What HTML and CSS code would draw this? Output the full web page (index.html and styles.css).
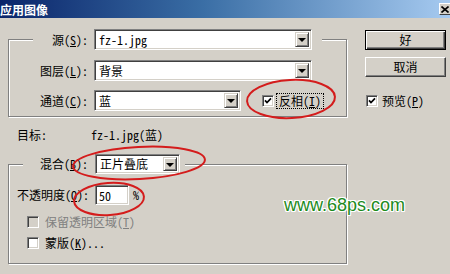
FILE: index.html
```html
<!DOCTYPE html>
<html lang="zh-CN">
<head>
  <meta charset="UTF-8">
  <title>应用图像</title>
  <link rel="stylesheet" href="styles.css">
</head>
<body>
  <div class="dialog">
    <div class="titlebar">
      <span class="title">应用图像</span>
      <span class="close">
        <svg width="8" height="7" viewBox="0 0 8 7"><path d="M0.5 0.5 L7.5 6.5 M7.5 0.5 L0.5 6.5" stroke="#000" stroke-width="1.6"/></svg>
      </span>
    </div>

    <div class="body">
      <div class="left">
        <fieldset class="group group-src">
          <legend class="row">
            <span class="lbl">源(<u>S</u>):</span>
            <div class="combo combo-wide"><span class="val">fz-1.jpg</span><i class="drop"></i></div>
          </legend>
          <div class="row row-layer">
            <span class="lbl">图层(<u>L</u>):</span>
            <div class="combo combo-wide"><span class="val">背景</span><i class="drop"></i></div>
          </div>
          <div class="row row-channel">
            <span class="lbl">通道(<u>C</u>):</span>
            <div class="combo combo-channel"><span class="val">蓝</span><i class="drop"></i></div>
            <span class="box checked invert-box"></span>
            <span class="focus">反相(<u>I</u>)</span>
          </div>
        </fieldset>

        <div class="target">
          <span class="target-key">目标:</span>
          <span>fz-1.jpg(蓝)</span>
        </div>

        <fieldset class="group group-blend">
          <legend class="row">
            <span class="lbl lbl-blend">混合(<u>B</u>):</span>
            <div class="combo combo-blend"><span class="val">正片叠底</span><i class="drop"></i></div>
          </legend>
          <div class="row row-opacity">
            <span class="lbl lbl-opacity">不透明度(<u>O</u>):</span>
            <div class="field">50</div>
            <span class="pct">%</span>
          </div>
          <div class="check check-keep disabled">
            <span class="box"></span>
            <span>保留透明区域(<u>T</u>)</span>
          </div>
          <div class="check check-mask">
            <span class="box"></span>
            <span>蒙版(<u>K</u>)...</span>
          </div>
        </fieldset>
      </div>

      <div class="right">
        <button class="btn btn-default">好</button>
        <button class="btn btn-cancel">取消</button>
        <div class="check check-preview">
          <span class="box checked"></span>
          <span>预览(<u>P</u>)</span>
        </div>
      </div>
    </div>

    <!-- red annotation rings drawn over the dialog -->
    <svg class="marks" width="450" height="274" viewBox="0 0 450 274">
      <ellipse cx="291" cy="99" rx="44" ry="19" transform="rotate(-3 291 99)"/>
      <ellipse cx="139" cy="163" rx="66" ry="16" transform="rotate(-3 139 163)"/>
      <ellipse cx="109" cy="199" rx="35" ry="16" transform="rotate(-4 109 199)"/>
    </svg>

    <div class="watermark">www.68ps.com</div>
  </div>
</body>
</html>
```

FILE: styles.css
```css
body {
  margin: 0;
  background: #d4d0c8;
  font: 12px/12px "Noto Sans Mono CJK SC", "Noto Sans CJK SC", sans-serif;
  color: #000;
}
u {
  text-decoration: underline;
  text-underline-offset: 1px;
}
.dialog {
  position: relative;
  width: 450px;
  height: 274px;
  overflow: hidden;
}

/* title bar */
.titlebar {
  height: 18px;
  display: flex;
  align-items: center;
  justify-content: space-between;
  background: linear-gradient(to right, #0a246a, #3a6ea5 45%, #a6caf0);
}
.title {
  color: #fff;
  font-weight: bold;
  font-family: "Noto Sans CJK SC", sans-serif;
  padding-left: 0;
  margin-top: 1px;
}
.close {
  width: 16px;
  height: 12px;
  margin-right: -5px;
  display: flex;
  align-items: center;
  justify-content: center;
  background: #d4d0c8;
  box-sizing: border-box;
  border: 1px solid;
  border-color: #fff #404040 #404040 #fff;
}
.close svg {
  margin-left: -4px;
}

/* layout */
.body {
  display: flex;
}
.left {
  padding-left: 8px;
  width: 340px;
}
.right {
  margin-left: 17px;
  width: 81px;
  display: flex;
  flex-direction: column;
}

/* etched group boxes */
.group {
  margin: 0;
  padding: 0;
  min-width: 0;
  box-sizing: border-box;
  width: 339px;
  border: 1px solid #808080;
  box-shadow: inset 1px 1px 0 #fff, 1px 1px 0 #fff;
}
.group legend {
  padding: 0;
  background: #d4d0c8;
}
.row {
  display: flex;
  align-items: center;
}
.lbl {
  width: 55px;
  text-align: right;
  margin-right: 6px;
  white-space: nowrap;
}

.group-src {
  margin-top: 11px;
  padding: 0 0 5px 24px;
}
.group-src legend {
  margin-left: 0;
  padding-right: 10px;
}
.row-layer {
  margin-top: 10px;
}
.row-channel {
  margin-top: 9px;
}

.group-blend {
  margin-top: 13px;
  padding: 0 0 14px 0;
}
.group-blend legend {
  margin-left: 14px;
  padding-right: 5px;
}
.lbl-blend {
  width: 65px;
  margin-right: 7px;
}
.row-opacity {
  margin-top: 11px;
  padding-left: 8px;
}
.lbl-opacity {
  width: 71px;
  margin-right: 7px;
}

/* sunken controls */
.combo, .field, .box {
  box-sizing: border-box;
  background: #fff;
  border: 1px solid;
  border-color: #808080 #fff #fff #808080;
  box-shadow: inset 1px 1px 0 #404040, inset -1px -1px 0 #d4d0c8;
}
.combo {
  height: 21px;
  display: flex;
  align-items: center;
  padding: 2px;
}
.combo .val {
  flex: 1;
  padding-left: 2px;
}
.combo-wide {
  width: 218px;
}
.combo-channel {
  width: 147px;
}
.combo-blend {
  width: 85px;
  height: 20px;
}
.drop {
  width: 14px;
  align-self: stretch;
  box-sizing: border-box;
  background: #d4d0c8;
  border: 1px solid;
  border-color: #d4d0c8 #404040 #404040 #d4d0c8;
  box-shadow: inset 1px 1px 0 #fff, inset -1px -1px 0 #808080;
  display: flex;
  align-items: center;
  justify-content: center;
}
.drop::after {
  content: "";
  border-style: solid;
  border-width: 4px 4px 0;
  border-color: #000 transparent transparent;
  margin-top: 1px;
}

.field {
  width: 34px;
  height: 20px;
  padding: 4px 0 0 3px;
}
.pct {
  margin-left: 4px;
}

/* checkboxes */
.box {
  width: 12px;
  height: 12px;
  flex: none;
  display: inline-block;
}
.box.checked {
  background: #fff url("data:image/svg+xml;utf8,<svg xmlns='http://www.w3.org/2000/svg' width='8' height='8' viewBox='0 0 8 8'><path d='M1 3.4 L3 5.6 L7 1.4' fill='none' stroke='black' stroke-width='1.7'/></svg>") center / 8px 8px no-repeat;
}
.invert-box {
  margin-left: 21px;
}
.focus {
  margin-left: 3px;
  padding: 1px 2px;
  outline: 1px dotted #000;
}
.check {
  display: flex;
  align-items: center;
  gap: 6px;
  height: 13px;
}
.check.disabled {
  color: #808080;
}
.check.disabled .box {
  background: #d4d0c8;
}
.check-keep {
  margin-top: 10px;
  padding-left: 18px;
}
.check-mask {
  margin-top: 8px;
  padding-left: 18px;
}

.target {
  display: flex;
  margin-top: 12px;
  padding-left: 9px;
}
.target-key {
  width: 74px;
}

/* buttons */
.btn {
  width: 81px;
  height: 20px;
  padding: 0;
  font: inherit;
  background: #d4d0c8;
  border: 1px solid;
  border-color: #fff #404040 #404040 #fff;
  box-shadow: inset -1px -1px 0 #808080;
}
.btn-default {
  margin-top: 12px;
  border-color: #000;
  box-shadow: inset 1px 1px 0 #fff, inset -1px -1px 0 #404040, inset -2px -2px 0 #808080;
}
.btn-cancel {
  margin-top: 7px;
}
.check-preview {
  margin-top: 17px;
  margin-left: 1px;
  gap: 4px;
}

/* overlays */
.marks {
  position: absolute;
  left: 0;
  top: 0;
  pointer-events: none;
}
.marks ellipse {
  fill: none;
  stroke: #d41c1c;
  stroke-width: 2;
}
.watermark {
  position: absolute;
  left: 284px;
  top: 196px;
  font: 18px/18px "Liberation Sans", Arial, sans-serif;
  color: #1d8a1d;
  text-shadow: 1px 0 #fff, -1px 0 #fff, 0 1px #fff, 0 -1px #fff,
    1px 1px #fff, -1px -1px #fff, 1px -1px #fff, -1px 1px #fff;
}
```
